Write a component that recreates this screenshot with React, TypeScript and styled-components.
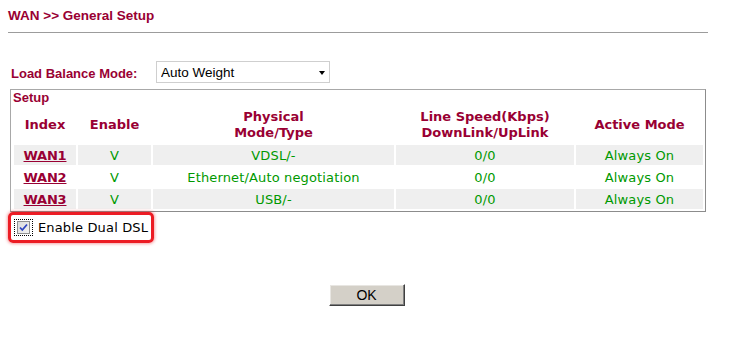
import React from "react";
import styled, { createGlobalStyle } from "styled-components";

const Global = createGlobalStyle`
  html, body { margin: 0; padding: 0; background: #ffffff; }
  body { font-family: "Liberation Sans", Arial, sans-serif; }
`;

const RED = "#990033";
const GREEN = "#009900";

const Page = styled.div`
  width: 731px;
  height: 351px;
  padding-top: 8px;
  box-sizing: border-box;
  overflow: hidden;
`;

const Title = styled.div`
  padding-left: 8px;
  height: 16px;
  line-height: 16px;
  font: bold 13.5px "Liberation Sans", Arial, sans-serif;
  color: ${RED};
  white-space: nowrap;
`;

const Rule = styled.div`
  margin: 8px 0 0 8px;
  width: 700px;
  height: 1px;
  background: #9c9c9c;
`;

const ModeRow = styled.div`
  margin-top: 28px;
  display: flex;
  align-items: flex-start;
  height: 22px;
`;

const ModeLabel = styled.div`
  margin: 5px 0 0 11px;
  width: 145px;
  line-height: 15px;
  font: bold 13px "Liberation Sans", Arial, sans-serif;
  color: ${RED};
  white-space: nowrap;
`;

const SelectWrap = styled.div`
  position: relative;
  width: 174px;
  height: 22px;
`;

const Select = styled.select`
  appearance: none;
  -webkit-appearance: none;
  width: 100%;
  height: 100%;
  box-sizing: border-box;
  border: 1px solid #cfcfcf;
  border-radius: 0;
  background: #ffffff;
  padding: 0 0 0 4px;
  margin: 0;
  font: 13.5px "Liberation Sans", Arial, sans-serif;
  color: #000;
  outline: none;
`;

const Arrow = styled.span`
  position: absolute;
  right: 5px;
  top: 10px;
  width: 0;
  height: 0;
  border-left: 3.5px solid transparent;
  border-right: 3.5px solid transparent;
  border-top: 4px solid #000;
  pointer-events: none;
`;

const SetupBox = styled.div`
  margin: 6px 0 0 10px;
  width: 696px;
  box-sizing: border-box;
  border: 1px solid #a8a8a8;
  border-right-color: #8c8c8c;
  border-bottom-color: #8c8c8c;
  padding: 0 2px 2px 3px;
`;

const SetupLabel = styled.div`
  margin-left: -1px;
  height: 15px;
  line-height: 15px;
  font: bold 13px "Liberation Sans", Arial, sans-serif;
  color: ${RED};
`;

const Grid = styled.div`
  margin-top: 2px;
  display: grid;
  grid-template-columns: 62px 73px 241px 178px 127px;
  grid-auto-rows: 20px;
  grid-template-rows: 36px;
  gap: 2px;
`;

const Head = styled.div`
  display: flex;
  align-items: center;
  justify-content: center;
  text-align: center;
  font: bold 13px "DejaVu Sans", Verdana, sans-serif;
  line-height: 16px;
  color: ${RED};
`;

const Cell = styled.div<{ $shade: boolean }>`
  display: flex;
  align-items: center;
  justify-content: center;
  background: ${(p) => (p.$shade ? "#efefef" : "#ffffff")};
  font: 13px "DejaVu Sans", Verdana, sans-serif;
  letter-spacing: 0.15px;
  color: ${GREEN};
  white-space: nowrap;
`;

const WanLink = styled.a`
  font: bold 13px "DejaVu Sans", Verdana, sans-serif;
  color: ${RED};
  text-decoration: underline;
  letter-spacing: -0.2px;
`;

const DualBox = styled.label`
  margin: 0 0 0 8px;
  display: inline-flex;
  align-items: center;
  height: 25px;
  width: 137px;
  border: 3.5px solid #ec1c24;
  border-radius: 5px;
  box-shadow: 0 0 3px 1px rgba(236, 28, 36, 0.4);
  padding-left: 3px;
  gap: 5px;
  font: 13px "DejaVu Sans", Verdana, sans-serif;
  letter-spacing: 0.15px;
  color: #000;
  white-space: nowrap;
`;

const FocusRing = styled.span`
  display: inline-flex;
  align-items: center;
  justify-content: center;
  width: 19px;
  height: 17px;
  box-sizing: border-box;
  border: 1px dotted #000;
`;

const CheckBox = styled.span`
  display: inline-flex;
  align-items: center;
  justify-content: center;
  width: 13px;
  height: 13px;
  box-sizing: border-box;
  border: 1px solid #8e8f8f;
  background: linear-gradient(135deg, #dcdcdc, #f2f2f2);
`;

const HiddenInput = styled.input`
  position: absolute;
  opacity: 0;
  width: 0;
  height: 0;
  margin: 0;
`;

const ButtonRow = styled.div`
  margin-top: 41px;
  display: flex;
  justify-content: center;
  padding-left: 2px;
`;

const OkButton = styled.button`
  width: 76px;
  height: 22px;
  box-sizing: border-box;
  background: #d4d0c8;
  border: 1px solid;
  border-color: #ffffff #404040 #404040 #ffffff;
  box-shadow: inset -1px -1px 0 #808080, inset 1px 1px 0 #e8e6e2;
  font: 14px "Liberation Sans", Arial, sans-serif;
  color: #000;
  padding: 0;
  margin: 0;
`;

type Row = { index: string; mode: string; speed: string; active: string };

const rows: Row[] = [
  { index: "WAN1", mode: "VDSL/-", speed: "0/0", active: "Always On" },
  { index: "WAN2", mode: "Ethernet/Auto negotiation", speed: "0/0", active: "Always On" },
  { index: "WAN3", mode: "USB/-", speed: "0/0", active: "Always On" },
];

export default function App() {
  return (
    <Page>
      <Global />
      <Title>WAN &gt;&gt; General Setup</Title>
      <Rule />
      <ModeRow>
        <ModeLabel>Load Balance Mode:</ModeLabel>
        <SelectWrap>
          <Select defaultValue="auto">
            <option value="auto">Auto Weight</option>
            <option value="manual">According to Policy</option>
          </Select>
          <Arrow />
        </SelectWrap>
      </ModeRow>
      <SetupBox>
        <SetupLabel>Setup</SetupLabel>
        <Grid>
          <Head>Index</Head>
          <Head>Enable</Head>
          <Head>
            Physical
            <br />
            Mode/Type
          </Head>
          <Head>
            Line Speed(Kbps)
            <br />
            DownLink/UpLink
          </Head>
          <Head>Active Mode</Head>
          {rows.map((r, i) => {
            const shade = i % 2 === 0;
            return (
              <React.Fragment key={r.index}>
                <Cell $shade={shade}>
                  <WanLink href="#">{r.index}</WanLink>
                </Cell>
                <Cell $shade={shade}>V</Cell>
                <Cell $shade={shade}>{r.mode}</Cell>
                <Cell $shade={shade}>{r.speed}</Cell>
                <Cell $shade={shade}>{r.active}</Cell>
              </React.Fragment>
            );
          })}
        </Grid>
      </SetupBox>
      <DualBox>
        <HiddenInput type="checkbox" defaultChecked />
        <FocusRing>
          <CheckBox>
            <svg width="9" height="9" viewBox="0 0 9 9">
              <path d="M1 4.5 L3.3 7 L8 1.5" fill="none" stroke="#2f45c0" strokeWidth="1.8" />
            </svg>
          </CheckBox>
        </FocusRing>
        Enable Dual DSL
      </DualBox>
      <ButtonRow>
        <OkButton>OK</OkButton>
      </ButtonRow>
    </Page>
  );
}
